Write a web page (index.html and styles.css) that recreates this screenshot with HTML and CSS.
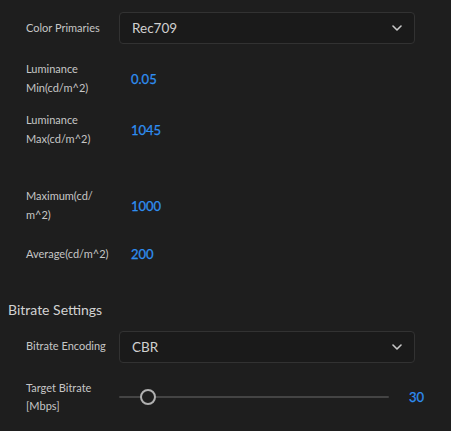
FILE: index.html
```html
<!DOCTYPE html>
<html>
<head>
<meta charset="utf-8">
<link rel="stylesheet" href="styles.css">
</head>
<body>
<div class="panel">
  <div class="row r1">
    <div class="label">Color Primaries</div>
    <div class="select"><span>Rec709</span><svg class="chev" width="10" height="6" viewBox="0 0 10 6"><path d="M1 1 L5 5 L9 1" fill="none" stroke="#c8c8c8" stroke-width="1.6" stroke-linecap="round" stroke-linejoin="round"/></svg></div>
  </div>
  <div class="row r2">
    <div class="label">Luminance<br>Min(cd/m^2)</div>
    <div class="value">0.05</div>
  </div>
  <div class="row r3">
    <div class="label">Luminance<br>Max(cd/m^2)</div>
    <div class="value">1045</div>
  </div>
  <div class="row r4">
    <div class="label">Maximum(cd/<br>m^2)</div>
    <div class="value">1000</div>
  </div>
  <div class="row r5">
    <div class="label">Average(cd/m^2)</div>
    <div class="value">200</div>
  </div>
  <div class="heading">Bitrate Settings</div>
  <div class="row r6">
    <div class="label">Bitrate Encoding</div>
    <div class="select"><span>CBR</span><svg class="chev" width="10" height="6" viewBox="0 0 10 6"><path d="M1 1 L5 5 L9 1" fill="none" stroke="#c8c8c8" stroke-width="1.6" stroke-linecap="round" stroke-linejoin="round"/></svg></div>
  </div>
  <div class="row r7">
    <div class="label">Target Bitrate<br>[Mbps]</div>
    <div class="slider">
      <div class="track"><div class="thumb"></div></div>
      <div class="svalue">30</div>
    </div>
  </div>
</div>
</body>
</html>
```
FILE: styles.css
```css
html, body {
  margin: 0;
  padding: 0;
  background: #1e1e1e;
  width: 451px;
  height: 431px;
  overflow: hidden;
}
.panel {
  font-family: Lato, "Noto Sans", sans-serif;
  color: #c6c6c6;
  padding-top: 12px;
}
.row {
  display: flex;
  align-items: center;
  padding-left: 26px;
}
.label {
  width: 93px;
  flex: none;
  font-size: 11px;
  line-height: 18.5px;
}
.value {
  padding-left: 12px;
  color: #2f8ef0;
  font-size: 13px;
  font-weight: 400;
  -webkit-text-stroke: 0.25px #2f8ef0;
}
.select {
  box-sizing: border-box;
  width: 296px;
  height: 32px;
  background: #1a1a1a;
  border: 1px solid #323232;
  border-radius: 4px;
  display: flex;
  align-items: center;
  justify-content: space-between;
  padding: 0 12px 0 12px;
  font-size: 13.5px;
  color: #d0d0d0;
}
.chev { display: block; }
.r2 { margin-top: 16px; }
.r3 { margin-top: 14px; }
.r4 { margin-top: 39px; }
.r5 { margin-top: 21px; }
.heading {
  margin-top: 37px;
  padding-left: 8px;
  font-size: 14px;
  line-height: 18px;
  color: #d2d2d2;
}
.r6 { margin-top: 12px; }
.r7 { margin-top: 16px; }
.slider {
  display: flex;
  align-items: center;
  width: 305px;
}
.track {
  position: relative;
  width: 271px;
  height: 2px;
  background: #444;
  border-radius: 1px;
}
.thumb {
  position: absolute;
  left: 21px;
  top: -7px;
  box-sizing: border-box;
  width: 16px;
  height: 16px;
  border: 2px solid #b0b0b0;
  border-radius: 50%;
  background: #1e1e1e;
}
.svalue {
  margin-left: 20px;
  color: #2f8ef0;
  font-size: 13px;
  font-weight: 400;
  -webkit-text-stroke: 0.25px #2f8ef0;
}
```
